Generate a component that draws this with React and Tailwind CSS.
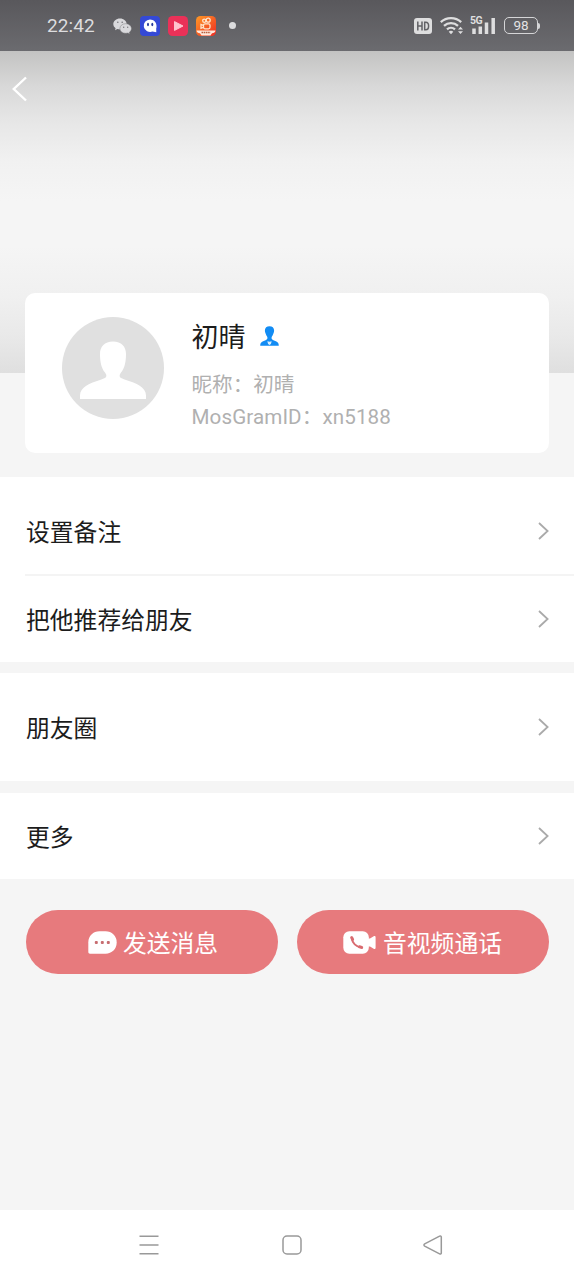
import React from 'react';

function WeChatIcon() {
  return (
    <svg className="h-[16px] w-[19px]" viewBox="0 0 19 16">
      <path fill="#d9d9dc" d="M7 .4C3.200.4.3 2.900.3 6c0 1.800.9 3.200 2.300 4.200L2 12.200l2.300-1.200c.9.3 1.800.4 2.700.4C10.700 11.400 13.700 9 13.700 6S10.700.4 7 .4z" />
      <path fill="#d9d9dc" stroke="#646468" strokeWidth=".4" d="M12.700 5.700c-3.300 0-5.800 2.100-5.800 4.800s2.500 4.800 5.800 4.800c.8 0 1.500-.1 2.200-.3l1.900 1-.5-1.700c1.400-.9 2.200-2.300 2.200-3.800 0-2.700-2.600-4.800-5.800-4.800z" />
      <g fill="#77777b">
        <circle cx="4.800" cy="4.300" r=".8" />
        <circle cx="9.200" cy="4.300" r=".8" />
        <circle cx="10.700" cy="9.200" r=".7" />
        <circle cx="14.700" cy="9.200" r=".7" />
      </g>
    </svg>
  );
}

function GhostIcon() {
  return (
    <svg className="h-[20px] w-[20px]" viewBox="0 0 20 20">
      <rect width="20" height="20" rx="4" fill="#3449d6" />
      <path fill="#fff" d="M10 3.400a6.500 6.300 0 1 0 2.500 12.200l3.800.6-.1-3.700a6.400 6.400 0 0 0 .3-2.800c0-3.500-2.900-6.300-6.500-6.300z" />
      <ellipse cx="8" cy="8.500" rx="1" ry="1.700" fill="#24399c" />
      <ellipse cx="12.300" cy="8.500" rx="1" ry="1.700" fill="#24399c" />
    </svg>
  );
}

function PlayIcon() {
  return (
    <svg className="h-[20px] w-[20px]" viewBox="0 0 20 20">
      <rect width="20" height="20" rx="4.500" fill="#ea3158" />
      <path d="M6.500 5.600v8.800l8.500-4.400z" fill="#ffc4cf" stroke="#ffc4cf" strokeLinejoin="round" />
    </svg>
  );
}

function VideoAppIcon() {
  return (
    <svg className="h-[20px] w-[20px]" viewBox="0 0 20 20">
      <defs>
        <linearGradient id="orange" x1="0" y1="0" x2="1" y2="1">
          <stop offset="0" stopColor="#ff9a25" />
          <stop offset="1" stopColor="#ee2b24" />
        </linearGradient>
      </defs>
      <rect width="20" height="20" rx="4.500" fill="url(#orange)" />
      <g fill="none" stroke="#ffe5cd" strokeWidth="1.300">
        <rect x="7.500" y="7.800" width="6.500" height="5" rx="1.500" />
        <circle cx="8.300" cy="4.700" r="1.600" />
        <circle cx="12.200" cy="4.200" r="2" />
        <path d="M7.300 9.400 5 8.400v3.900l2.300-1" />
      </g>
      <path d="M.5 14.500h19c-.3 2-1.500 2.600-3.500 2.800l-1.500 2.200H5.500L4 17.300c-2-.2-3.200-.8-3.500-2.800z" fill="#ffe9dd" />
      <path d="M5.500 16.500h9" stroke="#b8603e" strokeWidth="1.500" strokeDasharray="1.600 .6" />
    </svg>
  );
}

function HdIcon() {
  return (
    <svg className="h-[16px] w-[18px]" viewBox="0 0 18 16">
      <rect width="18" height="16" rx="3" fill="#dededf" />
      <path d="M3.800 3.500v9M8 3.500v9M3.800 8H8M10.700 4.200v7.600h1.100c1.800 0 2.800-1 2.800-3.800s-1-3.800-2.800-3.800z" fill="none" stroke="#626266" strokeWidth="1.500" />
    </svg>
  );
}

function WifiIcon() {
  return (
    <svg className="h-[19px] w-[24px]" viewBox="0 0 24 19">
      <g fill="none" stroke="#dededf" strokeWidth="2.300">
        <path d="M.8 6.200a15 15 0 0 1 20.400 0" />
        <path d="M4 9.900a10.300 10.300 0 0 1 14 0" />
        <path d="M7 13.400a6 6 0 0 1 8 0" />
      </g>
      <path d="M8.700 15.700a3.400 3.400 0 0 1 4.600 0L11 18.300zM18 13.600l2.500-2.800 2.500 2.800zM18 15.200h5L20.500 18z" fill="#dededf" />
    </svg>
  );
}

function SignalIcon() {
  return (
    <div className="relative h-[19px] w-[26px]">
      <svg className="h-[19px] w-[26px]" viewBox="0 0 26 19">
        <path d="M4 18v-5.500M10.300 18v-7.500M16.500 18V6.500M23.200 18V2" stroke="#dededf" strokeWidth="3.500" />
      </svg>
      <span className="absolute top-0 left-0 text-[10.500px] leading-[10px] font-bold tracking-[-0.5px] text-[#dededf]">5G</span>
    </div>
  );
}

function Battery() {
  return (
    <div className="flex items-center">
      <div className="flex h-[17px] w-[34px] items-center justify-center rounded-[5px] border border-[#d5d5d7] pt-px text-[13.5px] leading-none text-[#e2e2e3]">98</div>
      <div className="h-[6px] w-[2px] rounded-r-sm bg-[#d5d5d7]" />
    </div>
  );
}

function StatusBar() {
  return (
    <div className="flex h-[51px] items-center bg-linear-to-b from-[#59585c] to-[#6b6b6f] pl-[46px]">
      <span className="w-[67px] pt-[2px] pl-px text-[19px] tracking-[0.1px] text-[#dddddf]">22:42</span>
      <div className="flex items-center gap-[8px]">
        <WeChatIcon />
        <GhostIcon />
        <PlayIcon />
        <VideoAppIcon />
        <span className="ml-[5px] h-[7px] w-[7px] rounded-full bg-[#dcdcde]" />
      </div>
      <div className="ml-auto flex items-center pr-[34px]">
        <HdIcon />
        <div className="ml-[8px]"><WifiIcon /></div>
        <div className="mr-[8px] ml-[6px]"><SignalIcon /></div>
        <Battery />
      </div>
    </div>
  );
}

function PersonIcon() {
  return (
    <svg className="h-[20px] w-[19px]" viewBox="0 0 19 20">
      <path fill="#128cf4" d="M9.500.2C6.700.2 4.900 1.800 4.900 4.300c0 1 .1 1.800.5 2.600.6 2 1.500 3.100 1.900 4.200.4 1.400 0 2.200-1.200 2.900l-3.500 1.600C1 16.300.2 17.600.2 19.700h18.600c0-2.100-.8-3.400-2.400-4.100L12.900 14c-1.200-.7-1.600-1.500-1.200-2.900.4-1.100 1.300-2.200 1.900-4.200.4-.8.500-1.600.5-2.600C14.100 1.800 12.300.2 9.500.2z" />
      <path fill="#d9eeff" d="M7.300 15.200l2.200.6 2.200-.6-.8 2.800-1.400 1L8.100 18z" />
    </svg>
  );
}

function Avatar() {
  return (
    <svg className="h-[102px] w-[102px]" viewBox="0 0 102 102">
      <circle cx="51" cy="51" r="51" fill="#e0e0e0" />
      <path fill="#fff" d="M51 24.500c-8.500 0-13 5-13 12.500 0 8 1.500 14.500 5 18.500 3 4.500 1 5.500-5 7.500-10 3-20 7-20 15.500V82h66v-3.500C84 70 74 66 64 63c-6-2-8-3-5-7.500 3.500-4 5-10.500 5-18.500 0-7.500-4.500-12.500-13-12.500z" />
    </svg>
  );
}

function Chevron() {
  return (
    <svg className="h-[18px] w-[11px]" viewBox="0 0 11 18" fill="none" stroke="#aaa" strokeWidth="1.800">
      <path d="M1 1l8.600 8L1 17" />
    </svg>
  );
}

function Row({ label, className }) {
  return (
    <div className={`flex items-center justify-between bg-white pr-[25px] pl-[26px] ${className}`}>
      <span className="pt-[3px] text-[23.8px] leading-[32px]">{label}</span>
      <Chevron />
    </div>
  );
}

function ProfileCard() {
  return (
    <div className="mx-[25px] -mt-[80px] flex h-[160px] rounded-[10px] bg-white pt-[24px] pl-[37px]">
      <Avatar />
      <div className="ml-[27.500px]">
        <div className="flex h-[38px] items-center gap-[14px]">
          <span className="pt-[3px] text-[27px] leading-[38px]">初晴</span>
          <PersonIcon />
        </div>
        <div className="mt-[14px] text-[20.6px] leading-[32px] text-[#b0b0b0]">
          <p>昵称：初晴</p>
          <p className="tracking-[0.1px]">MosGramID：xn5188</p>
        </div>
      </div>
    </div>
  );
}

function MessageIcon() {
  return (
    <svg className="h-[23px] w-[29px]" viewBox="0 0 29 23">
      <path fill="#fff" d="M11.500.3h6C23.900.3 28.700 5 28.700 11.500S23.900 22.700 17.500 22.700H2C1 22.700.3 22 .3 21v-9.500C.3 5 5.100.3 11.500.3z" />
      <g fill="#c76d70">
        <rect x="6.800" y="10" width="3" height="3" rx="1" />
        <rect x="12.800" y="10" width="3" height="3" rx="1" />
        <rect x="18.800" y="10" width="3" height="3" rx="1" />
      </g>
    </svg>
  );
}

function CallIcon() {
  return (
    <svg className="h-[23px] w-[33px]" viewBox="0 0 33 23">
      <rect x=".3" y=".2" width="25.500" height="22.600" rx="6" fill="#fff" />
      <path fill="#fff" d="M24 7.500h3l3.700-2.200c1-.5 1.900-.1 1.900 1v10.400c0 1.100-.9 1.500-1.900 1L27 15.500h-3z" />
      <path d="M8.800 6.500c.2 5.300 4.200 9.700 10.200 10.200" fill="none" stroke="#d96b70" strokeWidth="1.900" strokeLinecap="round" />
      <path d="M8.700 6.700l.9 1.800M16.500 15.800l2.200.6" fill="none" stroke="#d96b70" strokeWidth="3" strokeLinecap="round" />
    </svg>
  );
}

function ActionButton({ icon, className, children }) {
  return (
    <button className={`flex h-[64px] w-[252px] items-center justify-center rounded-full bg-[#e77a7d] text-[23.8px] leading-[32px] text-white ${className}`}>
      {icon}
      <span className="pt-[4px]">{children}</span>
    </button>
  );
}

function NavBar() {
  return (
    <div className="flex h-[70px] items-center justify-between bg-white pr-[131px] pl-[139px]">
      <svg className="h-[20px] w-[20px]" viewBox="0 0 20 20" stroke="#999" strokeWidth="1.500">
        <path d="M.5 1.200h19M.5 10h19M.5 18.800h19" />
      </svg>
      <svg className="ml-px h-[20px] w-[20px]" viewBox="0 0 20 20" fill="none" stroke="#999" strokeWidth="1.500">
        <rect x="1" y="1" width="18" height="18" rx="4" />
      </svg>
      <svg className="h-[20px] w-[20px]" viewBox="0 0 20 20" fill="none" stroke="#999" strokeWidth="1.500">
        <path d="M1.700 8.900 16.600 1.200c1-.5 1.700-.1 1.700.9v15.800c0 1-.7 1.400-1.700.9L1.700 11.100c-1-.6-1-1.600 0-2.200z" />
      </svg>
    </div>
  );
}

export default function App() {
  return (
    <div className="flex h-[1280px] w-[574px] flex-col bg-[#f5f5f5] font-[Roboto,'Noto_Sans_CJK_SC',sans-serif] text-[#1c1c1c]">
      <StatusBar />
      <div className="h-[322px] bg-[linear-gradient(180deg,#c3c3c2_0px,#d8d8d8_35px,#e7e7e7_72px,#f1f1f1_110px,#f5f5f5_150px,#f5f5f5_195px,#f0f0f0_245px,#e9e9e9_285px,#dfdfdf_322px)] pt-[25px] pl-[12px]">
        <svg className="h-[26px] w-[15px]" viewBox="0 0 15 26" fill="none" stroke="#fff" strokeWidth="2.400">
          <path d="M14 1.500 1.800 13 14 24.500" />
        </svg>
      </div>
      <ProfileCard />
      <div className="mt-[24px]">
        <Row label="设置备注" className="h-[97px] pt-[11px]" />
        <div className="bg-white pl-[25px]"><div className="h-[2px] bg-[#f4f4f4]" /></div>
        <Row label="把他推荐给朋友" className="h-[86px]" />
      </div>
      <Row label="朋友圈" className="mt-[11px] h-[108px]" />
      <Row label="更多" className="mt-[12px] h-[86px]" />
      <div className="mt-[31px] flex gap-[19px] pl-[25.500px]">
        <ActionButton className="gap-[6px] pl-[3px]" icon={<MessageIcon />}>发送消息</ActionButton>
        <ActionButton className="gap-[7px]" icon={<CallIcon />}>音视频通话</ActionButton>
      </div>
      <div className="mt-auto">
        <NavBar />
      </div>
    </div>
  );
}
